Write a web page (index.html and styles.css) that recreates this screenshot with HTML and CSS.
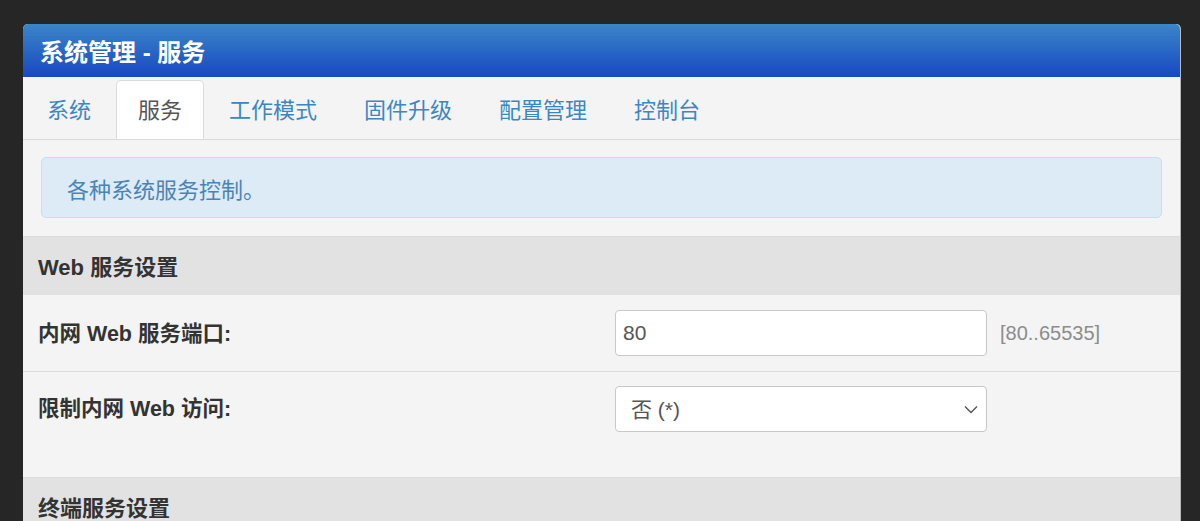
FILE: index.html
```html
<!DOCTYPE html>
<html lang="zh-CN">
<head>
    <meta charset="UTF-8">
    <meta name="viewport" content="width=device-width, initial-scale=1.0">
    <title>系统管理 - 服务</title>
    <link rel="stylesheet" href="styles.css">
</head>
<body>
    <div class="panel">
        <div class="panel-head">系统管理 - 服务</div>

        <ul class="tabs">
            <li class="tab">系统</li>
            <li class="tab active">服务</li>
            <li class="tab">工作模式</li>
            <li class="tab">固件升级</li>
            <li class="tab">配置管理</li>
            <li class="tab">控制台</li>
        </ul>

        <div class="intro">
            <div class="alert">各种系统服务控制。</div>
        </div>

        <div class="section-title">Web 服务设置</div>
        <div class="row">
            <label class="row-label" for="lan-port">内网 Web 服务端口:</label>
            <input class="field" id="lan-port" type="text" value="80">
            <span class="hint">[80..65535]</span>
        </div>
        <div class="row row-last">
            <label class="row-label" for="lan-limit">限制内网 Web 访问:</label>
            <div class="select-wrap">
                <select class="field select" id="lan-limit">
                    <option>否 (*)</option>
                    <option>是</option>
                </select>
                <svg class="chevron" width="14" height="9" viewBox="0 0 14 9">
                    <path d="M1 1.5 L7 7.5 L13 1.5" fill="none" stroke="#555" stroke-width="1.4"/>
                </svg>
            </div>
        </div>

        <div class="section-title">终端服务设置</div>
    </div>
</body>
</html>
```

FILE: styles.css
```css
body {
    margin: 0;
    padding: 24px 19px 0 23px;
    background-color: #262626;
    font-family: "Liberation Sans", "Noto Sans CJK SC", sans-serif;
    color: #333;
    overflow: hidden;
}
.panel {
    background: #f4f4f4;
    border-radius: 5px 5px 0 0;
    border-right: 1px solid #b8b8b8;
    min-height: 520px;
}
.panel-head {
    height: 53px;
    display: flex;
    align-items: center;
    padding-left: 17px;
    border-radius: 5px 5px 0 0;
    background: linear-gradient(to bottom, #3a86c8, #1848c3);
    color: #fff;
    font-size: 24px;
    font-weight: bold;
}
.tabs {
    display: flex;
    list-style: none;
    margin: 0;
    padding: 3px 2px 0;
    border-bottom: 1px solid #dadada;
}
.tab {
    height: 55px;
    padding: 2px 21px 0;
    line-height: 55px;
    margin-right: 3px;
    border: 1px solid transparent;
    border-radius: 5px 5px 0 0;
    color: #3b87c6;
    font-size: 22px;
}
.tab.active {
    background: #fff;
    color: #555;
    border-color: #dadada;
    border-bottom-color: transparent;
    margin-bottom: -1px;
}
.intro {
    padding: 17px 18px 18px;
}
.alert {
    height: 59px;
    display: flex;
    align-items: center;
    padding-left: 25px;
    background: #dcebf6;
    border: 1px solid #c0e1f1;
    border-radius: 5px;
    color: #4a84b6;
    font-size: 22px;
}
.section-title {
    box-sizing: border-box;
    height: 59px;
    display: flex;
    align-items: center;
    padding: 0 0 3px 15px;
    background: #e2e2e2;
    border-top: 1px solid #dcdcdc;
    font-size: 22px;
    font-weight: bold;
}
.row {
    display: flex;
    align-items: center;
    padding: 15px 15px 15px;
    border-bottom: 1px solid #dcdcdc;
}
.row-last {
    border-bottom: none;
    align-items: flex-start;
    padding-top: 14px;
    padding-bottom: 45px;
}
.row-label {
    width: 577px;
    padding-bottom: 4px;
    font-size: 21.5px;
    font-weight: bold;
    color: #333;
}
.row-last .row-label {
    padding-bottom: 0;
    line-height: 46px;
}
.field {
    box-sizing: border-box;
    width: 372px;
    height: 46px;
    padding: 0 7px;
    border: 1px solid #c8c8c8;
    border-radius: 4px;
    background: #fff;
    font-family: "Liberation Sans", "Noto Sans CJK SC", sans-serif;
    font-size: 21px;
    color: #555;
}
.hint {
    margin-left: 13px;
    font-size: 20px;
    color: #8c8c8c;
}
.select-wrap {
    position: relative;
}
.select {
    appearance: none;
    -webkit-appearance: none;
    padding-left: 15px;
}
.chevron {
    position: absolute;
    right: 9px;
    top: 19px;
    pointer-events: none;
}
```
